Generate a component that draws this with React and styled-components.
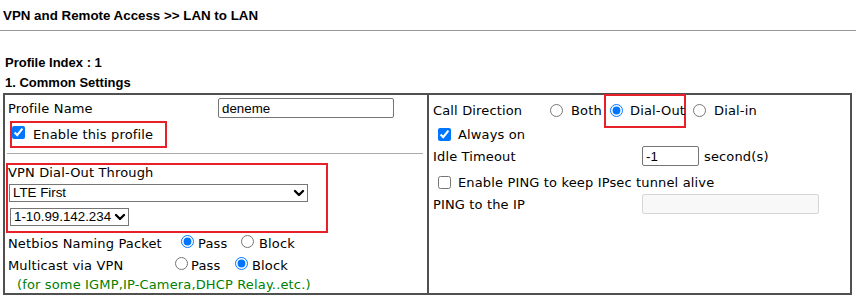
import styled, { createGlobalStyle } from 'styled-components';
import { ChevronDown } from 'lucide-react';

const GlobalStyle = createGlobalStyle`
  body {
    margin: 0;
    background: #fff;
  }
`;

const Page = styled.div`
  width: 856px;
  height: 299px;
  overflow: hidden;
  background: #fff;
  color: #000;
`;

const Title = styled.div`
  height: 16px;
  padding: 8px 0 6px 3px;
  font: bold 13.33px/16px "Liberation Sans", Arial, sans-serif;
  border-bottom: 1px solid #999;
`;

const Heading = styled.div`
  padding-left: 5px;
  margin-top: ${p => p.$top || 0}px;
  font: bold 13px/20px "Liberation Sans", Arial, sans-serif;
`;

const Table = styled.div`
  display: flex;
  box-sizing: border-box;
  width: 849px;
  height: 202px;
  margin-left: 3px;
  border: 2px solid #505050;
  font: 13px "DejaVu Sans", Verdana, sans-serif;
  letter-spacing: 0.15px;
`;

const LeftCell = styled.div`
  width: 422px;
  flex-shrink: 0;
  box-sizing: border-box;
  padding-left: 3px;
  display: flex;
  flex-direction: column;
`;

const RightCell = styled.div`
  flex: 1;
  border-left: 2px solid #505050;
  padding-left: 4px;
  display: flex;
  flex-direction: column;
`;

const Row = styled.div`
  display: flex;
  align-items: center;
  height: ${p => p.$h}px;
  flex-shrink: 0;
  margin-top: ${p => p.$top || 0}px;
  white-space: nowrap;
`;

const Label = styled.span`
  width: ${p => p.$w}px;
  flex-shrink: 0;
  line-height: 15px;
`;

const Text = styled.span`
  line-height: 15px;
  margin-left: ${p => p.$ml || 0}px;
`;

const TextInput = styled.input`
  box-sizing: border-box;
  width: ${p => p.$w}px;
  height: 20px;
  margin: 0;
  padding: 1px 3px;
  border: 1px solid ${p => (p.disabled ? '#d6d6d6' : '#767676')};
  border-radius: 2px;
  background: ${p => (p.disabled ? '#f8f8f8' : '#fff')};
  font-family: "Liberation Sans", Arial, sans-serif;
  font-size: 13.333px;
  letter-spacing: 0;
  color: #000;
`;

const SelectWrap = styled.div`
  position: relative;
  width: ${p => p.$w}px;
  height: 18px;
  margin: ${p => p.$top || 0}px 0 0 ${p => p.$left || 0}px;
  flex-shrink: 0;

  svg {
    position: absolute;
    right: 1px;
    top: 1px;
    pointer-events: none;
  }
`;

const Select = styled.select`
  appearance: none;
  box-sizing: border-box;
  width: 100%;
  height: 100%;
  margin: 0;
  padding: 0 16px 0 3px;
  border: 1px solid #767676;
  border-radius: 0;
  background: #fff;
  font-family: "Liberation Sans", Arial, sans-serif;
  font-size: 13.333px;
  letter-spacing: 0;
  line-height: 16px;
  color: #000;
`;

const Check = styled.input.attrs({ type: 'checkbox', readOnly: true })`
  width: 13px;
  height: 13px;
  flex-shrink: 0;
  margin: 0 ${p => p.$mr || 0}px ${p => p.$mb || 0}px ${p => p.$ml || 0}px;
`;

const Radio = styled.input.attrs({ type: 'radio', readOnly: true })`
  width: 13px;
  height: 13px;
  flex-shrink: 0;
  margin: 0 0 ${p => p.$mb || 0}px ${p => p.$ml || 0}px;
`;

const Option = styled.label`
  display: flex;
  align-items: center;
  flex-shrink: 0;
  width: ${p => (p.$w ? `${p.$w}px` : 'auto')};
  gap: ${p => p.$gap}px;
  margin-left: ${p => p.$ml || 0}px;
  line-height: 15px;
`;

const EnableBox = styled.label`
  display: flex;
  align-items: center;
  box-sizing: border-box;
  width: 157px;
  height: 27px;
  margin-left: 2px;
  border: 2px solid #e8202a;
  line-height: 15px;
  flex-shrink: 0;
`;

const Divider = styled.div`
  width: 416px;
  height: 1px;
  margin: 5px 0 0 -1px;
  background: #ababab;
  flex-shrink: 0;
`;

const DialBox = styled.div`
  display: flex;
  flex-direction: column;
  align-items: flex-start;
  box-sizing: border-box;
  width: 322px;
  height: 70px;
  margin: 9px 0 0 -2px;
  padding-bottom: 5px;
  border: 2px solid #e8202a;
  flex-shrink: 0;
`;

const DirectionBox = styled.label`
  display: flex;
  align-items: center;
  box-sizing: border-box;
  width: 82px;
  height: 34px;
  padding: 0 2px;
  border: 2px solid #e8202a;
  flex-shrink: 0;
  line-height: 15px;
`;

const Note = styled.div`
  height: 17px;
  padding-left: 9px;
  display: flex;
  align-items: center;
  line-height: 15px;
  color: #008000;
  white-space: nowrap;
`;

function Dropdown({ width, top, left, children }) {
  return (
    <SelectWrap $w={width} $top={top} $left={left}>
      <Select defaultValue="0">{children}</Select>
      <ChevronDown size={16} strokeWidth={3.5} color="#000" />
    </SelectWrap>
  );
}

export default function App() {
  return (
    <Page>
      <GlobalStyle />
      <Title>VPN and Remote Access &gt;&gt; LAN to LAN</Title>
      <Heading $top={22}>Profile Index : 1</Heading>
      <Heading>1. Common Settings</Heading>
      <Table>
        <LeftCell>
          <Row $h={26}>
            <Label $w={210}>Profile Name</Label>
            <TextInput $w={176} defaultValue="deneme" />
          </Row>
          <EnableBox>
            <Check defaultChecked $mr={8} $mb={5} />
            Enable this profile
          </EnableBox>
          <Divider />
          <DialBox>
            <Text>VPN Dial-Out Through</Text>
            <Dropdown width={299} top={4} left={1}>
              <option value="0">LTE First</option>
            </Dropdown>
            <Dropdown width={119} top={6} left={2}>
              <option value="0">1-10.99.142.234</option>
            </Dropdown>
          </DialBox>
          <Row $h={22} $top={-1}>
            <Label $w={173}>Netbios Naming Packet</Label>
            <Option $w={60} $gap={4}>
              <Radio name="netbios" defaultChecked $mb={3} />
              Pass
            </Option>
            <Option $gap={5}>
              <Radio name="netbios" $mb={3} />
              Block
            </Option>
          </Row>
          <Row $h={22}>
            <Label $w={167}>Multicast via VPN</Label>
            <Option $w={60} $gap={3}>
              <Radio name="multicast" $mb={3} />
              Pass
            </Option>
            <Option $gap={4}>
              <Radio name="multicast" defaultChecked $mb={3} />
              Block
            </Option>
          </Row>
          <Note>(for some IGMP,IP-Camera,DHCP Relay..etc.)</Note>
        </LeftCell>
        <RightCell>
          <Row $h={31}>
            <Label $w={117}>Call Direction</Label>
            <Option $w={54} $gap={8}>
              <Radio name="direction" />
              Both
            </Option>
            <DirectionBox>
              <Radio name="direction" defaultChecked $ml={2} />
              <Text $ml={7}>Dial-Out</Text>
            </DirectionBox>
            <Option $gap={8} $ml={7}>
              <Radio name="direction" />
              Dial-in
            </Option>
          </Row>
          <Row $h={16}>
            <Check defaultChecked $ml={5} $mr={7} />
            <Text>Always on</Text>
          </Row>
          <Row $h={28}>
            <Label $w={209}>Idle Timeout</Label>
            <TextInput $w={57} defaultValue="-1" />
            <Text $ml={5}>second(s)</Text>
          </Row>
          <Row $h={24}>
            <Check $ml={5} $mr={7} />
            <Text>Enable PING to keep IPsec tunnel alive</Text>
          </Row>
          <Row $h={20}>
            <Label $w={209}>PING to the IP</Label>
            <TextInput $w={177} disabled defaultValue="" />
          </Row>
        </RightCell>
      </Table>
    </Page>
  );
}
